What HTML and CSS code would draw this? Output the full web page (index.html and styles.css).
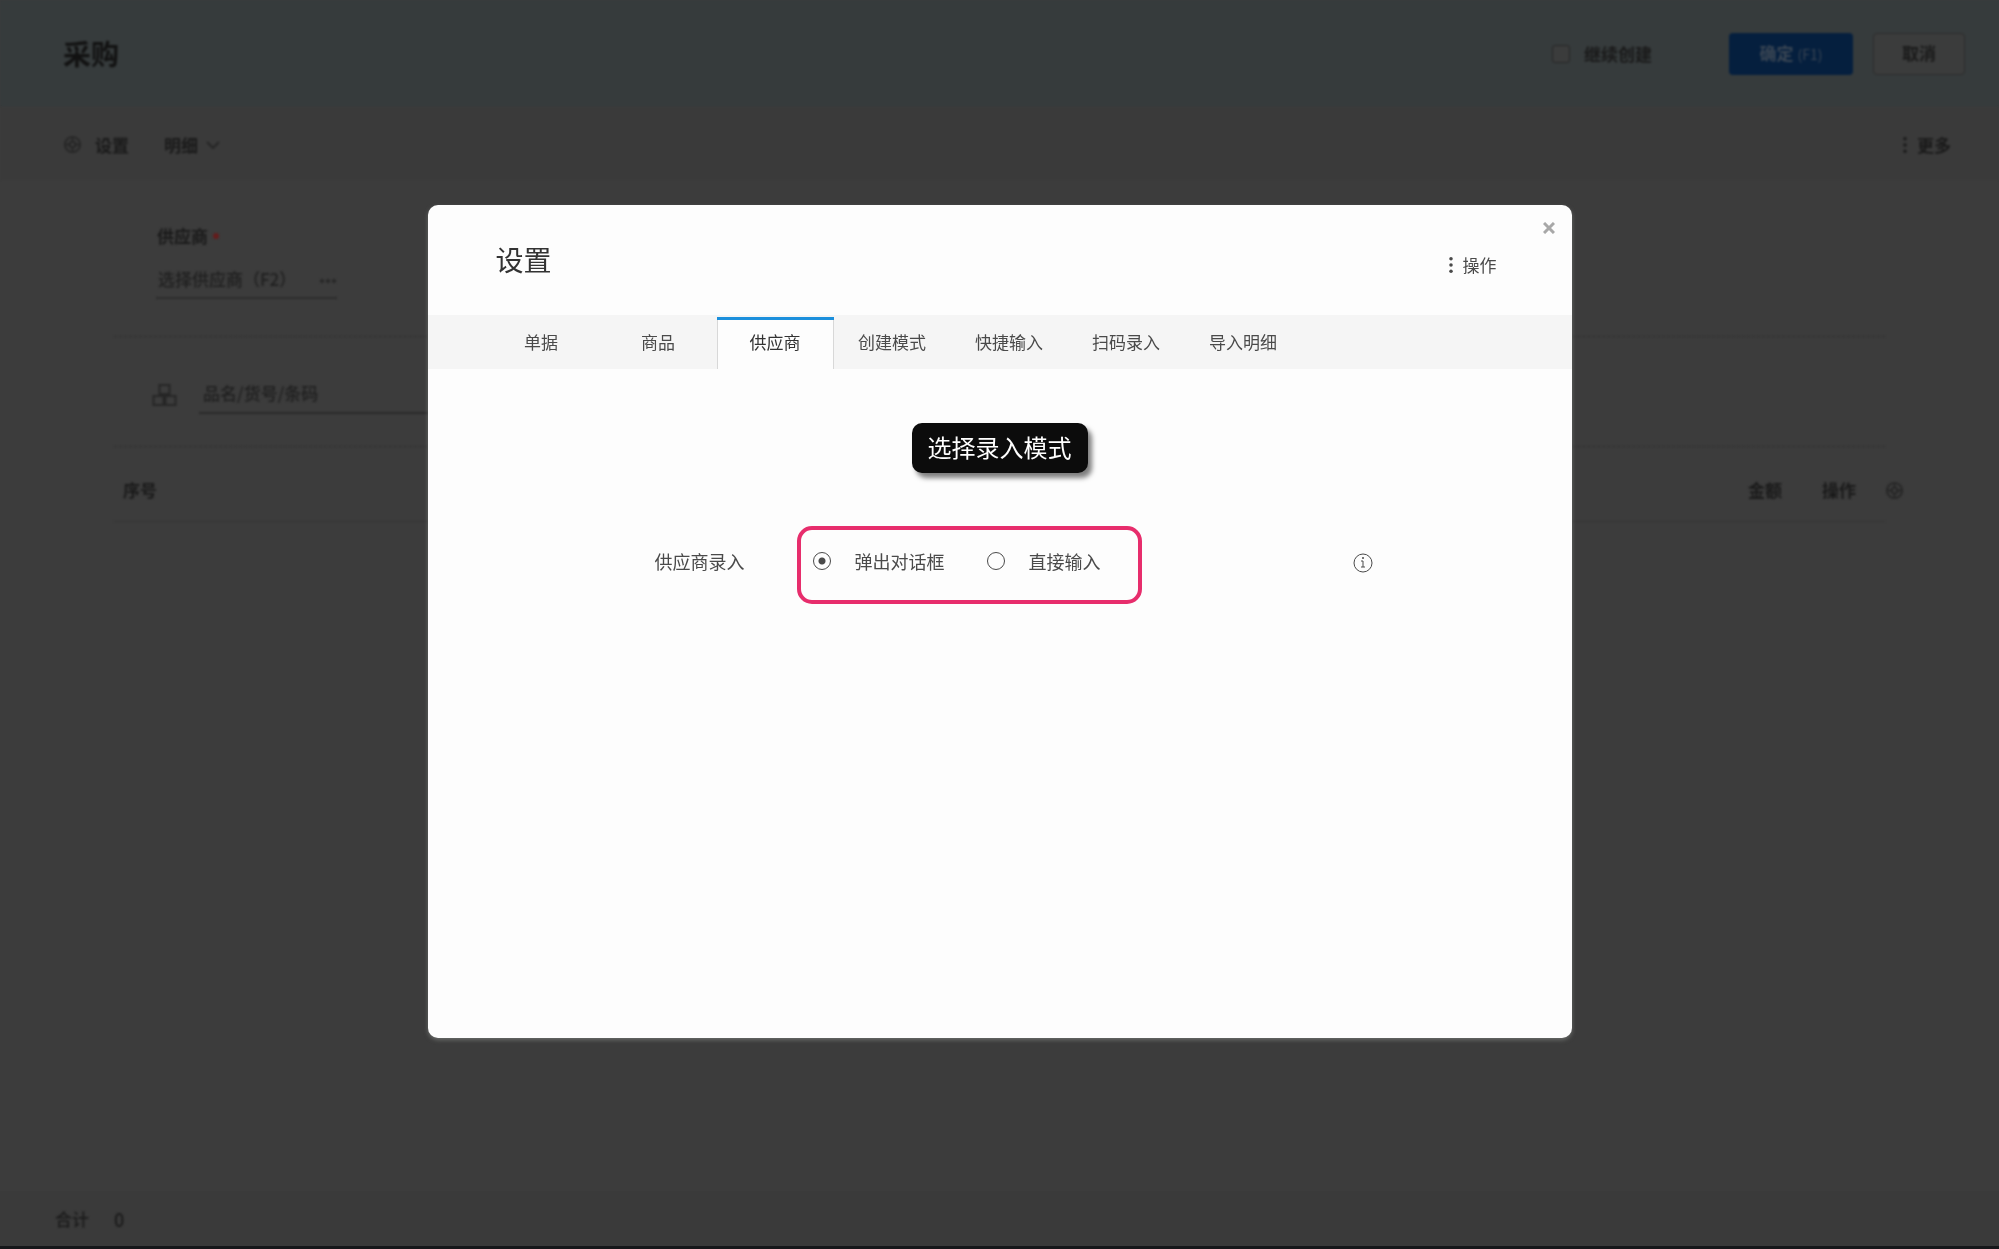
FILE: index.html
```html
<!DOCTYPE html>
<html lang="zh-CN">
<head>
    <meta charset="UTF-8">
    <meta name="viewport" content="width=device-width, initial-scale=1.0">
    <title>采购 - 设置</title>
    <link rel="stylesheet" href="styles.css">
</head>
<body>

    <!-- 采购单页面 -->
    <div class="page">
        <header class="page-header">
            <h1>采购</h1>
            <label class="keep-creating"><input type="checkbox">继续创建</label>
            <button type="button" class="btn btn-primary">确定 <small>(F1)</small></button>
            <button type="button" class="btn">取消</button>
        </header>

        <div class="toolbar">
            <button type="button" class="tool">
                <svg class="gear" viewBox="0 0 20 20"><circle cx="10" cy="10" r="8"/><circle cx="10" cy="10" r="3"/><path d="M10 2v5M10 13v5M2 10h5M13 10h5"/></svg>
                设置
            </button>
            <button type="button" class="tool tool-menu">
                明细
                <svg class="chevron" viewBox="0 0 14 8"><path d="M1 1l6 6 6-6"/></svg>
            </button>
            <button type="button" class="tool tool-more">
                <svg class="dots" viewBox="0 0 4 18"><circle cx="2" cy="2" r="2"/><circle cx="2" cy="9" r="2"/><circle cx="2" cy="16" r="2"/></svg>
                更多
            </button>
        </div>

        <main>
            <div class="form-row supplier-row">
                <label for="supplier">供应商<span class="required"></span></label>
                <div class="supplier-field">
                    <input type="text" id="supplier" placeholder="选择供应商（F2）">
                    <button type="button" aria-label="选择供应商"><svg viewBox="0 0 18 4"><circle cx="3" cy="2" r="2"/><circle cx="9" cy="2" r="2"/><circle cx="15" cy="2" r="2"/></svg></button>
                </div>
            </div>

            <div class="form-row goods-row">
                <svg class="boxes" viewBox="0 0 24 24"><path d="M7 2h10v9H7zM1 13h10v9H1zM13 13h10v9H13z"/></svg>
                <input type="text" aria-label="商品" placeholder="品名/货号/条码">
            </div>

            <div class="detail">
                <table>
                    <thead>
                        <tr><th>序号</th><th class="col-right">金额</th><th class="col-right">操作</th></tr>
                    </thead>
                </table>
                <svg class="gear" viewBox="0 0 20 20"><circle cx="10" cy="10" r="8"/><circle cx="10" cy="10" r="3"/><path d="M10 2v5M10 13v5M2 10h5M13 10h5"/></svg>
            </div>
        </main>

        <footer class="page-footer">
            <span>合计</span>
            <span class="total">0</span>
        </footer>
    </div>

    <!-- 设置对话框 -->
    <div class="overlay">
        <section class="dialog" role="dialog" aria-labelledby="dialog-title">
            <button type="button" class="close" aria-label="关闭"><svg viewBox="0 0 12 12"><path d="M1 1l10 10M11 1l-10 10"/></svg></button>

            <div class="dialog-header">
                <h2 id="dialog-title">设置</h2>
                <button type="button" class="actions">
                    <svg class="dots" viewBox="0 0 4 18"><circle cx="2" cy="2" r="2"/><circle cx="2" cy="9" r="2"/><circle cx="2" cy="16" r="2"/></svg>
                    操作
                </button>
            </div>

            <nav class="tabs">
                <a href="#">单据</a>
                <a href="#">商品</a>
                <a href="#" class="active">供应商</a>
                <a href="#">创建模式</a>
                <a href="#">快捷输入</a>
                <a href="#">扫码录入</a>
                <a href="#">导入明细</a>
            </nav>

            <div class="dialog-body">
                <div class="hint">选择录入模式</div>

                <div class="setting" role="radiogroup" aria-labelledby="mode-label">
                    <span class="setting-label" id="mode-label">供应商录入</span>
                    <div class="options">
                        <label><input type="radio" name="mode" checked>弹出对话框</label>
                        <label><input type="radio" name="mode">直接输入</label>
                    </div>
                    <button type="button" class="info" aria-label="说明">
                        <svg viewBox="0 0 20 20"><circle cx="10" cy="10" r="9"/><path d="M8 8h2v6M8 14h4"/><circle class="dot" cx="10" cy="5" r="1"/></svg>
                    </button>
                </div>
            </div>
        </section>
    </div>

</body>
</html>
```

FILE: styles.css
```css
* {
    box-sizing: border-box;
}

body {
    margin: 0;
    font-family: "Noto Sans CJK SC", sans-serif;
    font-size: 17px;
    line-height: 24px;
    color: #1a1a1a;
    background-color: #3c3c3c;
}

button, input {
    font: inherit;
    color: inherit;
    margin: 0;
    padding: 0;
    border: none;
    background: none;
}

button {
    cursor: pointer;
}

svg {
    display: block;
    fill: none;
    stroke: currentColor;
}

/* 背景页面 */
.page {
    display: flex;
    flex-direction: column;
    min-height: 100vh;
    border-bottom: 3px solid #16171a;
    overflow: hidden;
}

.page-header, .toolbar, main, .page-footer > span {
    filter: blur(1px);
}

.page-header {
    display: flex;
    align-items: center;
    height: 107px;
    padding: 0 34px 0 63px;
    background-color: #363b3c;
}

h1 {
    margin: 0 auto 0 0;
    padding-bottom: 2px;
    font-size: 28px;
    line-height: 40px;
    color: #121212;
}

.keep-creating {
    display: flex;
    align-items: center;
    gap: 14px;
    margin-right: 77px;
    font-weight: bold;
}

.keep-creating input {
    appearance: none;
    width: 18px;
    height: 18px;
    border: 1px solid #262626;
    border-radius: 3px;
    background-color: #3b3c3c;
}

.btn {
    width: 92px;
    height: 42px;
    padding-bottom: 2px;
    border: 1px solid #2c2c2c;
    border-radius: 4px;
    background-color: #3b3c3c;
    font-weight: bold;
}

.btn-primary {
    width: 124px;
    margin-right: 20px;
    padding: 0;
    border: none;
    background-color: #051f3e;
    color: #3a4654;
}

.btn-primary small {
    font-size: 14px;
    font-weight: normal;
}

.toolbar {
    display: flex;
    align-items: center;
    height: 73px;
    padding: 2px 48px 0 63px;
    background-color: #3a3a3a;
}

.tool {
    display: flex;
    align-items: center;
    gap: 13px;
    font-weight: bold;
}

.tool-menu {
    gap: 8px;
    margin-left: 35px;
}

.tool-more {
    gap: 10px;
    margin-left: auto;
}

.gear {
    width: 19px;
    height: 19px;
    color: #262626;
    stroke-width: 2;
}

.chevron {
    width: 14px;
    height: 8px;
    stroke-width: 2;
    color: #262626;
}

.dots {
    width: 4px;
    height: 16px;
    fill: currentColor;
    stroke: none;
}

main {
    flex: 1;
}

.form-row {
    margin: 0 114px;
    border-bottom: 1px dashed #303030;
}

.supplier-row {
    height: 157px;
    padding: 44px 42px 0;
}

.supplier-row label {
    display: flex;
    align-items: center;
    gap: 5px;
    padding-left: 1px;
    font-weight: bold;
}

.required {
    width: 6px;
    height: 6px;
    border-radius: 3px;
    background-color: #641c1c;
}

.supplier-field {
    display: flex;
    align-items: center;
    width: 181px;
    height: 38px;
    margin-top: 13px;
    padding-left: 2px;
    border-bottom: 2px solid #2c2c2c;
}

.supplier-field input {
    flex: 1;
    min-width: 0;
    font-weight: 500;
}

.supplier-field button {
    padding-top: 4px;
    color: #262626;
}

.supplier-field button svg {
    width: 18px;
    height: 4px;
    fill: currentColor;
    stroke: none;
}

input::placeholder {
    color: #1f1f1f;
    opacity: 1;
}

.goods-row {
    display: flex;
    align-items: center;
    gap: 22px;
    height: 110px;
    padding: 6px 38px 0;
}

.goods-row input {
    width: 50%;
    height: 38px;
    padding: 0 4px 2px;
    border-bottom: 2px solid #2a2a2a;
    font-weight: 500;
}

.boxes {
    width: 25px;
    height: 24px;
    stroke-width: 2;
    color: #262626;
}

.detail {
    display: flex;
    align-items: center;
    padding: 0 95px 0 114px;
}

table {
    flex: 1;
    border-collapse: collapse;
    border-bottom: 1px solid #343434;
}

th {
    height: 74px;
    padding: 12px 9px 0;
    text-align: left;
    vertical-align: middle;
}

th.col-right {
    width: 74px;
    padding: 12px 29px 0 10px;
    text-align: right;
}

.detail .gear {
    margin-top: 12px;
}

.page-footer {
    display: flex;
    align-items: center;
    gap: 25px;
    height: 55px;
    padding: 0 55px;
    background-color: #3a3a3a;
    font-weight: 500;
}

.total {
    font-size: 18px;
}

/* 对话框 */
.overlay {
    position: fixed;
    inset: 0;
    display: flex;
    align-items: center;
    justify-content: center;
    padding-bottom: 6px;
}

.dialog {
    position: relative;
    width: 90%;
    max-width: 1144px;
    min-height: 833px;
    overflow: hidden;
    border-radius: 10px;
    background-color: #fdfdfd;
    box-shadow: 0 2px 4px #6a6c6a;
    color: #4a4a4a;
}

.close {
    position: absolute;
    top: 17px;
    right: 17px;
    color: #a8a8a8;
}

.close svg {
    width: 12px;
    height: 12px;
    stroke-width: 3;
}

.dialog-header {
    display: flex;
    align-items: center;
    justify-content: space-between;
    height: 110px;
    padding: 0 75px 0 68px;
}

h2 {
    margin: 0;
    padding-bottom: 2px;
    font-size: 28px;
    font-weight: normal;
    line-height: 40px;
    color: #333;
}

.actions {
    display: flex;
    align-items: center;
    gap: 10px;
    padding-top: 10px;
}

.tabs {
    display: flex;
    height: 54px;
    padding: 2px 55px 0;
    background-color: #f5f5f5;
}

.tabs a {
    width: 117px;
    border-top: 3px solid transparent;
    line-height: 44px;
    text-align: center;
    text-decoration: none;
    color: inherit;
}

.tabs .active {
    border-top-color: #1b8fdc;
    background-color: #fdfdfd;
    box-shadow: inset 1px 0 #d8d8d8, inset -1px 0 #d8d8d8;
    color: #333;
}

.dialog-body {
    padding-top: 54px;
    font-size: 18px;
}

.hint {
    width: fit-content;
    margin: 0 auto;
    padding: 4px 16px 6px;
    border-radius: 10px;
    background-color: #0c0c0c;
    box-shadow: 4px 5px 5px rgba(0, 0, 0, 0.5);
    font-size: 24px;
    line-height: 40px;
    color: #fff;
}

.setting {
    display: flex;
    align-items: flex-start;
    margin: 53px 199px 0 227px;
}

.setting-label {
    width: 142px;
    padding-top: 23px;
}

.options {
    display: flex;
    gap: 42px;
    width: 345px;
    height: 78px;
    padding: 19px 12px;
    border: 4px solid #e72d6c;
    border-radius: 15px;
}

.options label {
    display: flex;
    align-items: center;
    gap: 24px;
    height: 24px;
    white-space: nowrap;
}

.options input {
    appearance: none;
    width: 18px;
    height: 18px;
    border: 1px solid #4a4a4a;
    border-radius: 50%;
}

.options input:checked {
    background: radial-gradient(circle, #4a4a4a 3px, transparent 4px);
}

.info {
    margin: 27px 0 0 auto;
}

.info svg {
    width: 20px;
    height: 20px;
}

.info .dot {
    fill: currentColor;
    stroke: none;
}
```
